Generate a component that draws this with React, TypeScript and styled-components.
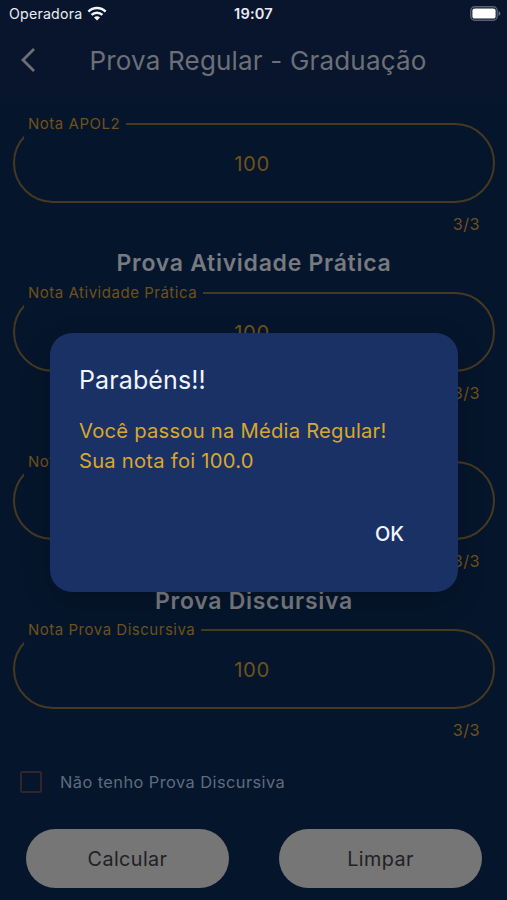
import React from "react";
import styled, { createGlobalStyle } from "styled-components";

const colors = {
  page: "#05152b",
  header: "#08152d",
  gold: "#6f511a",
  outline: "#463922",
  dialog: "#193165",
};

const GlobalStyle = createGlobalStyle`
  *, *::before, *::after { box-sizing: border-box; }
  body {
    margin: 0;
    background: ${colors.page};
    font-family: Inter, "Liberation Sans", sans-serif;
    overflow: hidden;
  }
`;

const Screen = styled.div`
  position: relative;
  display: flex;
  flex-direction: column;
  width: 507px;
  height: 900px;
  overflow: hidden;
  background: ${colors.page};
`;

const Top = styled.header`
  flex: none;
  height: 97px;
  background: ${colors.header};
`;

const StatusBar = styled.div`
  display: grid;
  grid-template-columns: 1fr auto 1fr;
  align-items: center;
  height: 27px;
  padding: 0 6px 0 9px;
  color: #e9edf5;
`;

const Carrier = styled.div`
  display: flex;
  align-items: center;
  gap: 5px;
  font-size: 14.2px;
  letter-spacing: 0.2px;
`;

const Clock = styled.div`
  padding-right: 3px;
  font-size: 14.6px;
  font-weight: 600;
  letter-spacing: 0.2px;
`;

const BatterySlot = styled.div`
  display: flex;
  justify-content: flex-end;
`;

const AppBar = styled.div`
  display: grid;
  grid-template-columns: 56px 1fr 47px;
  align-items: center;
  height: 66px;
  color: #6c7076;
`;

const BackButton = styled.button`
  display: flex;
  justify-content: center;
  padding: 0;
  border: 0;
  background: none;
  color: inherit;
`;

const Title = styled.h1`
  margin: 0;
  font-size: 26px;
  font-weight: 400;
  letter-spacing: 0.18px;
  text-align: center;
  white-space: nowrap;
`;

const Form = styled.main`
  display: flex;
  flex-direction: column;
  padding-top: 26.4px;
`;

const Section = styled.section`
  display: flex;
  flex-direction: column;
`;

const SectionTitle = styled.h2`
  height: 32px;
  margin: 0 0 12.6px;
  padding-left: 1px;
  color: #777a80;
  font-size: 23px;
  font-weight: 600;
  line-height: 33px;
  letter-spacing: 0.72px;
  text-align: center;
`;

const Field = styled.div`
  position: relative;
  display: flex;
  align-items: center;
  justify-content: center;
  height: 79.6px;
  margin: 0 12px 0 13px;
  border: 2px solid ${colors.outline};
  border-radius: 40px;
  color: ${colors.gold};
  font-size: 20.3px;
  letter-spacing: 0.6px;
  padding: 1px 4px 0 0;
`;

const Label = styled.label`
  position: absolute;
  top: -11px;
  left: 9px;
  height: 24px;
  padding: 0 5.5px 0 4px;
  background: ${colors.page};
  font-size: 15px;
  line-height: 19px;
  letter-spacing: 0.52px;
  white-space: nowrap;
`;

const Counter = styled.div`
  height: 44.4px;
  padding: 10px 27px 0 0;
  color: ${colors.gold};
  font-size: 16.3px;
  line-height: 22px;
  letter-spacing: 0.4px;
  text-align: right;
`;

const CheckRow = styled.label`
  display: flex;
  align-items: center;
  gap: 18px;
  height: 58px;
  padding-left: 20px;
  color: #5f6c7e;
  font-size: 16.4px;
  letter-spacing: 0.43px;
`;

const CheckBox = styled.span`
  width: 22px;
  height: 22px;
  border: 2px solid #2f252b;
  border-radius: 2px;
`;

const Actions = styled.div`
  display: grid;
  grid-template-columns: 1fr 1fr;
  gap: 50px;
  padding: 18px 25px 0 26px;
`;

const PillButton = styled.button`
  height: 59px;
  padding: 0;
  border: 0;
  border-radius: 30px;
  background: #767676;
  color: #202124;
  font-family: inherit;
  font-size: 19.8px;
  letter-spacing: 0.4px;
`;

const Overlay = styled.div`
  position: absolute;
  inset: 0;
  display: flex;
  align-items: flex-start;
  padding: 333px 49px 0 50px;
`;

const Dialog = styled.div`
  display: flex;
  flex-direction: column;
  width: 100%;
  height: 259px;
  padding: 29px 29px 0;
  border-radius: 22px;
  background: ${colors.dialog};
  box-shadow: 0 10px 30px rgba(0, 0, 0, 0.16);
`;

const DialogTitle = styled.h3`
  margin: 0 0 18px;
  color: #f0f4fc;
  font-size: 25px;
  font-weight: 400;
  line-height: 36px;
  letter-spacing: 0.12px;
`;

const DialogText = styled.p`
  margin: 0;
  color: #dba62f;
  font-size: 20.2px;
  line-height: 29.5px;
  letter-spacing: 0.24px;
`;

const DialogAction = styled.button`
  align-self: flex-end;
  margin: 44px 25px 0 0;
  padding: 0;
  border: 0;
  background: none;
  color: #f4f6fb;
  font-family: inherit;
  font-size: 20px;
  font-weight: 500;
  line-height: 30px;
  letter-spacing: 0;
`;

const WifiIcon = () => (
  <svg width="20" height="15" viewBox="0 0 20 15" fill="none" stroke="#f4f6fb" strokeWidth="2.5">
    <path d="M1.4 5.6C6.2.7 13.8.7 18.6 5.6" />
    <path d="M4.6 8.9C7.6 5.9 12.4 5.9 15.4 8.9" />
    <path d="M10 14.4 7 11.4C8.6 9.7 11.4 9.7 13 11.4Z" fill="#f4f6fb" stroke="none" />
  </svg>
);

const BatteryIcon = () => (
  <svg width="31" height="15" viewBox="0 0 31 15">
    <rect x="0.8" y="0.8" width="26.4" height="13.4" rx="4" fill="none" stroke="#596174" strokeWidth="1.4" />
    <rect x="2.4" y="2.4" width="23.2" height="10.2" rx="2.2" fill="#fff" />
    <path d="M28.6 5.2c2.3.8 2.3 3.8 0 4.6z" fill="#6d7485" />
  </svg>
);

const ChevronIcon = () => (
  <svg width="16" height="26" viewBox="0 0 16 26" fill="none" stroke="currentColor" strokeWidth="2.8">
    <path d="M14 2 3 13 14 24" />
  </svg>
);

type Grade = { heading?: string; label: string; value: string };

const grades: Grade[] = [
  { label: "Nota APOL2", value: "100" },
  { heading: "Prova Atividade Prática", label: "Nota Atividade Prática", value: "100" },
  { heading: "Prova Objetiva", label: "Nota Prova Objetiva", value: "100" },
  { heading: "Prova Discursiva", label: "Nota Prova Discursiva", value: "100" },
];

const GradeSection = ({ heading, label, value }: Grade) => (
  <Section>
    {heading && <SectionTitle>{heading}</SectionTitle>}
    <Field>
      <Label>{label}</Label>
      {value}
    </Field>
    <Counter>{value.length}/3</Counter>
  </Section>
);

export default function App() {
  return (
    <Screen>
      <GlobalStyle />
      <Top>
        <StatusBar>
          <Carrier>
            Operadora
            <WifiIcon />
          </Carrier>
          <Clock>19:07</Clock>
          <BatterySlot>
            <BatteryIcon />
          </BatterySlot>
        </StatusBar>
        <AppBar>
          <BackButton aria-label="Voltar">
            <ChevronIcon />
          </BackButton>
          <Title>Prova Regular - Graduação</Title>
        </AppBar>
      </Top>
      <Form>
        {grades.map((grade) => (
          <GradeSection key={grade.label} {...grade} />
        ))}
        <CheckRow>
          <CheckBox />
          Não tenho Prova Discursiva
        </CheckRow>
        <Actions>
          <PillButton>Calcular</PillButton>
          <PillButton>Limpar</PillButton>
        </Actions>
      </Form>
      <Overlay>
        <Dialog role="dialog">
          <DialogTitle>Parabéns!!</DialogTitle>
          <DialogText>
            Você passou na Média Regular!
            <br />
            Sua nota foi 100.0
          </DialogText>
          <DialogAction>OK</DialogAction>
        </Dialog>
      </Overlay>
    </Screen>
  );
}
